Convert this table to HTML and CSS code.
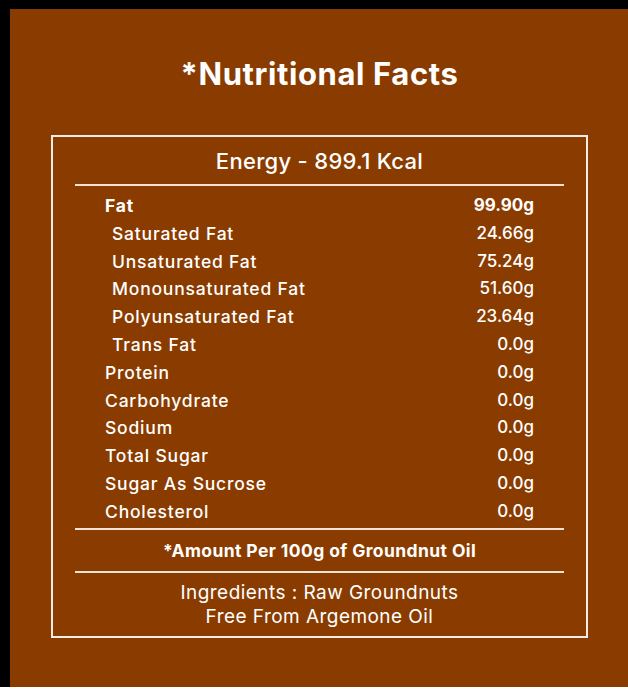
FILE: index.html
```html
<!DOCTYPE html>
<html lang="en">
<head>
<meta charset="utf-8">
<title>Nutritional Facts</title>
<link rel="stylesheet" href="styles.css">
</head>
<body>
<div class="frame">
  <section class="panel">
    <h1 class="title">*Nutritional Facts</h1>
    <div class="box">
      <div class="energy">Energy - 899.1 Kcal</div>
      <ul class="rows">
        <li class="row main"><span class="label">Fat</span><span class="value">99.90g</span></li>
        <li class="row sub"><span class="label">Saturated Fat</span><span class="value">24.66g</span></li>
        <li class="row sub"><span class="label">Unsaturated Fat</span><span class="value">75.24g</span></li>
        <li class="row sub"><span class="label">Monounsaturated Fat</span><span class="value">51.60g</span></li>
        <li class="row sub"><span class="label">Polyunsaturated Fat</span><span class="value">23.64g</span></li>
        <li class="row sub"><span class="label">Trans Fat</span><span class="value">0.0g</span></li>
        <li class="row"><span class="label">Protein</span><span class="value">0.0g</span></li>
        <li class="row"><span class="label">Carbohydrate</span><span class="value">0.0g</span></li>
        <li class="row"><span class="label">Sodium</span><span class="value">0.0g</span></li>
        <li class="row"><span class="label">Total Sugar</span><span class="value">0.0g</span></li>
        <li class="row"><span class="label">Sugar As Sucrose</span><span class="value">0.0g</span></li>
        <li class="row"><span class="label">Cholesterol</span><span class="value">0.0g</span></li>
      </ul>
      <div class="amount">*Amount Per 100g of Groundnut Oil</div>
      <div class="ingredients">
        <p>Ingredients : Raw Groundnuts</p>
        <p>Free From Argemone Oil</p>
      </div>
    </div>
  </section>
</div>
</body>
</html>
```
FILE: styles.css
```css
* { box-sizing: border-box; }
html, body { margin: 0; padding: 0; background: #ffffff; }
body { font-family: "Inter", "Open Sans", sans-serif; color: #ffffff; }
.frame { background: #000000; padding: 9px 0 0 10px; }
.panel {
  background: #8a3c00;
  height: 678px;
  padding: 47px 40px 0 41px;
}
.title {
  margin: 0;
  text-align: center;
  font-size: 31px;
  font-weight: 700;
  letter-spacing: 0.6px;
  line-height: 36px;
  height: 79px;
}
.box {
  border: 2px solid #f4ece4;
  padding: 0 22px;
}
.energy {
  text-align: center;
  font-size: 22px;
  font-weight: 500;
  letter-spacing: 0.3px;
  line-height: 26px;
  padding: 11px 0 10px;
  border-bottom: 2px solid #f0e4da;
}
.rows {
  list-style: none;
  margin: 0;
  padding: 6px 30px 2px;
  border-bottom: 2px solid #f0e4da;
}
.row {
  display: flex;
  justify-content: space-between;
  line-height: 27.8px;
  height: 27.8px;
  font-weight: 500;
}
.label { font-size: 17.5px; letter-spacing: 0.8px; }
.value { font-size: 17px; }
.row.main { font-weight: 700; }
.row.sub .label { padding-left: 7px; }
.amount {
  text-align: center;
  font-weight: 700;
  font-size: 17.5px;
  letter-spacing: 0.4px;
  line-height: 20px;
  padding: 11px 0 10px;
  border-bottom: 2px solid #f0e4da;
}
.ingredients {
  text-align: center;
  font-size: 19px;
  letter-spacing: 0.45px;
  line-height: 24px;
  padding: 8px 0 7px;
}
.ingredients p { margin: 0; }
```
